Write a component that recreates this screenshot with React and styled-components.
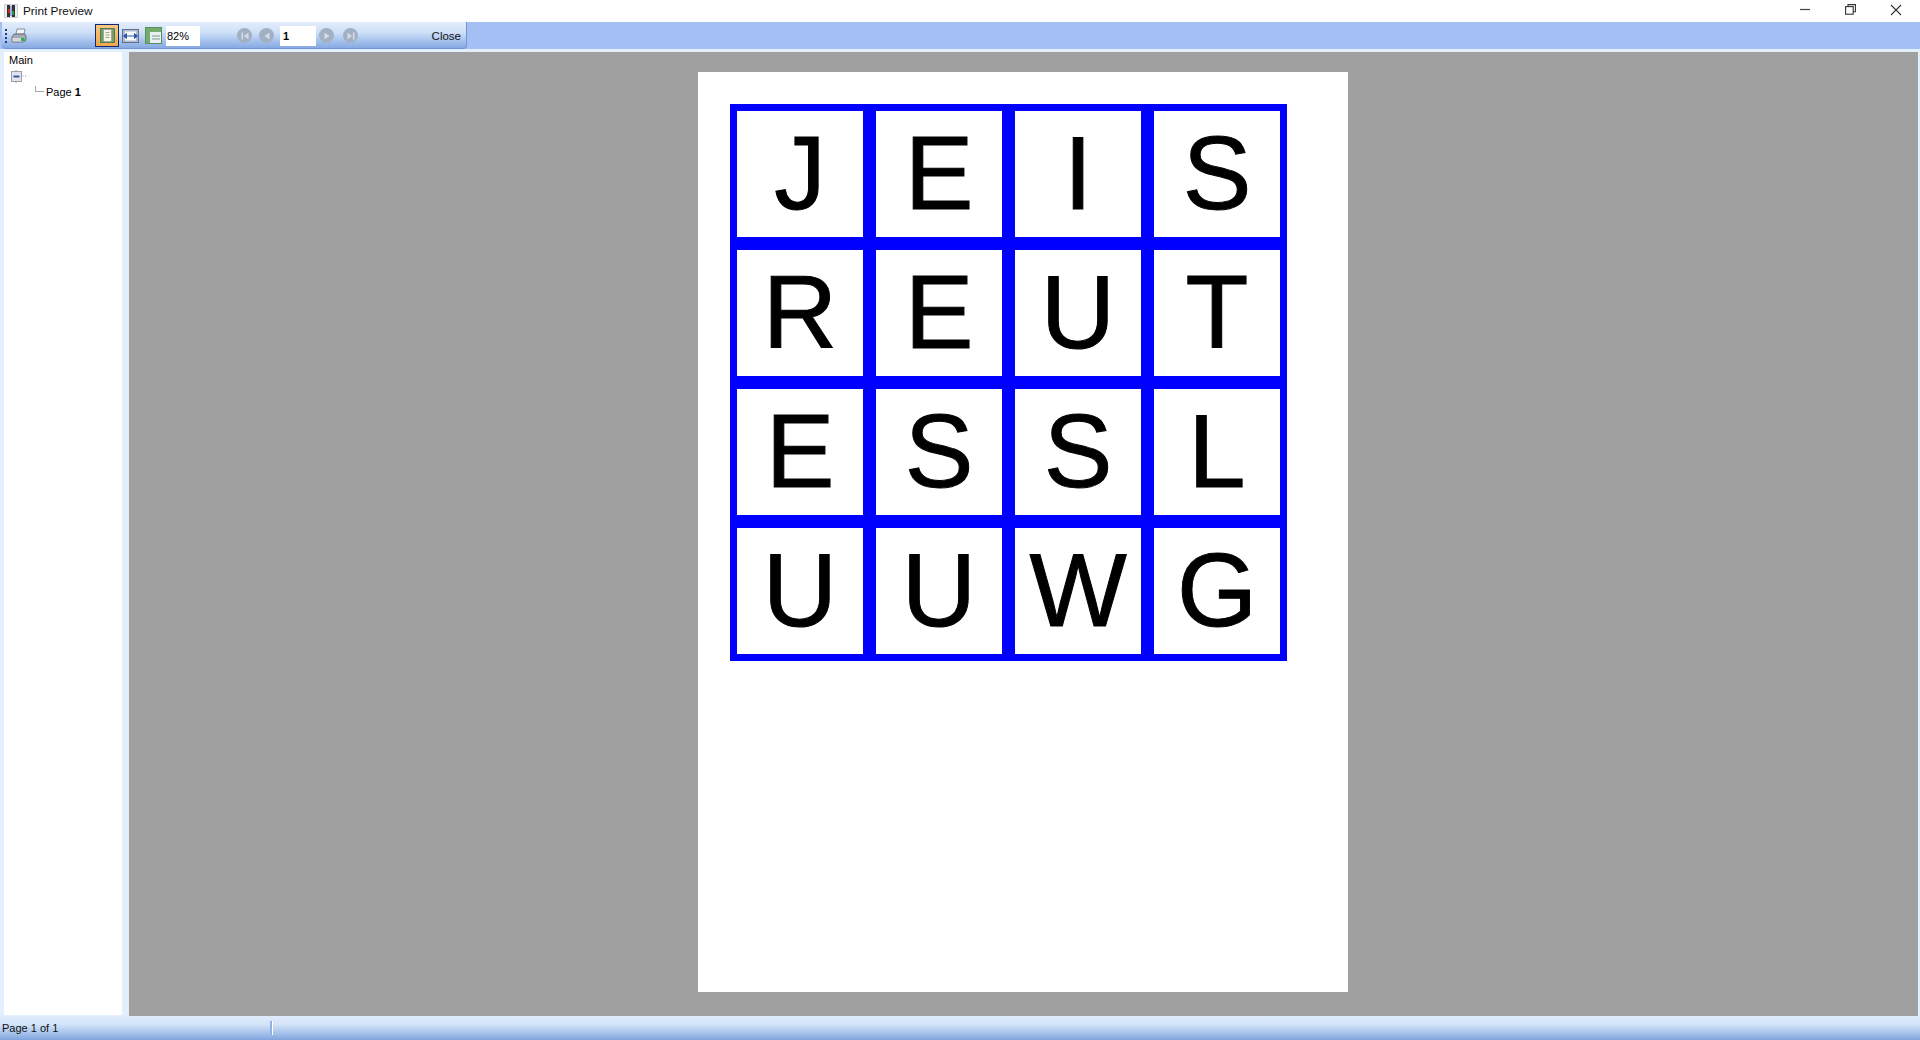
import React from 'react';
import styled, { createGlobalStyle } from 'styled-components';

const GRID = ['JEIS', 'REUT', 'ESSL', 'UUWG'];

const GlobalStyle = createGlobalStyle`
  html, body {
    margin: 0;
    height: 100%;
    overflow: hidden;
    font-family: 'Liberation Sans', Arial, sans-serif;
    font-size: 11px;
    color: #000;
  }
  #root { height: 100%; }
`;

function AppIcon() {
  return (
    <svg width="14" height="14" viewBox="0 0 14 14">
      <rect x="0.5" y="0.5" width="13" height="13" fill="#eee" stroke="#a8a8a8" strokeDasharray="1 1" />
      <rect x="3" y="1" width="3" height="12" fill="#333" />
      <rect x="4" y="5" width="2" height="4" fill="#d22" />
      <rect x="8" y="1" width="3" height="12" fill="#333" />
      <rect x="8" y="7" width="2" height="4" fill="#2a9a3a" />
      <rect x="6" y="2" width="2" height="10" fill="#8fb0e8" />
    </svg>
  );
}

function WindowControls() {
  return (
    <Controls>
      <svg width="11" height="11" viewBox="0 0 11 11">
        <path d="M0 5.5h10" stroke="#444" strokeWidth="1.2" />
      </svg>
      <svg width="11" height="11" viewBox="0 0 11 11" fill="none" stroke="#333" strokeWidth="1.1">
        <rect x="0.6" y="2.6" width="7.6" height="7.6" />
        <path d="M3 2.5V0.6h7.4V7.8H8.3" />
      </svg>
      <svg width="12" height="12" viewBox="0 0 12 12">
        <path d="M1 1l10 10M11 1L1 11" stroke="#333" strokeWidth="1.1" />
      </svg>
    </Controls>
  );
}

function PrinterIcon() {
  return (
    <svg width="16" height="16" viewBox="0 0 16 16">
      <path d="M6 1h8l-1 5H5z" fill="#f4f6f9" stroke="#6f7884" strokeWidth="0.8" />
      <path d="M3 6h11l1 2v4l-2 2H1v-5z" fill="#a3abb6" stroke="#59626e" strokeWidth="0.8" />
      <path d="M1.5 10h11v3.5h-11z" fill="#d4d8de" />
      <rect x="10" y="10" width="3.5" height="3" fill="#2fb14a" />
    </svg>
  );
}

function OnePageIcon() {
  return (
    <svg width="15" height="15" viewBox="0 0 15 15">
      <rect x="0.5" y="0.5" width="14" height="14" fill="#6f9f6c" stroke="#4e7d58" />
      <rect x="3.5" y="1.5" width="8" height="12" fill="#f4f3e4" stroke="#8f9a80" strokeWidth="0.6" />
      <path d="M5.5 4.5h4M5.5 7h4M5.5 9.5h4" stroke="#8b8f86" strokeWidth="0.8" />
    </svg>
  );
}

function PageWidthIcon() {
  return (
    <svg width="17" height="14" viewBox="0 0 17 14">
      <rect x="0.5" y="0.5" width="16" height="13" fill="#aebbd0" stroke="#5f6f86" />
      <rect x="3" y="2.5" width="11" height="9" fill="#f7f8fa" />
      <path d="M2 7h13M1.5 7l3-2.5v5zM15.5 7l-3-2.5v5z" stroke="#2d5aa8" strokeWidth="1" fill="#2d5aa8" />
    </svg>
  );
}

function TwoPageIcon() {
  return (
    <svg width="17" height="17" viewBox="0 0 17 17">
      <rect x="0.5" y="0.5" width="16" height="16" fill="#74ab6e" stroke="#5b8e5d" />
      <rect x="5" y="5" width="11" height="11" fill="#e9eff2" />
      <path d="M7 9h8M7 12h8" stroke="#7d9a8a" strokeWidth="1" />
    </svg>
  );
}

function NavGlyph({ kind }) {
  return (
    <NavCircle>
      <svg width="10" height="10" viewBox="0 0 10 10" fill="#d5dbe3">
        {kind === 'first' && <path d="M1.5 1.5h1.6v7H1.5zM8.5 1.5v7L4 5z" />}
        {kind === 'prev' && <path d="M7.5 1.5v7L2.5 5z" />}
        {kind === 'next' && <path d="M2.5 1.5v7L7.5 5z" />}
        {kind === 'last' && <path d="M6.9 1.5h1.6v7H6.9zM1.5 1.5v7L6 5z" />}
      </svg>
    </NavCircle>
  );
}

function TreeToggle() {
  return (
    <svg width="17" height="13" viewBox="0 0 17 13">
      <path d="M6 0v1.5M6 11.5V13M12.5 6h1M15 6h1" stroke="#9a9a9a" strokeWidth="1" />
      <rect x="1.5" y="1.5" width="10" height="10" fill="#e0e3ec" stroke="#9aa0ad" />
      <path d="M3.5 6.5h6" stroke="#2d4f96" strokeWidth="1.8" />
    </svg>
  );
}

export default function App() {
  return (
    <Window>
      <GlobalStyle />
      <TitleBar>
        <AppIcon />
        <TitleText>Print Preview</TitleText>
        <WindowControls />
      </TitleBar>
      <ToolStrip>
        <ToolBar>
          <Grip />
          <IconSlot $width={16} $left={4}>
            <PrinterIcon />
          </IconSlot>
          <ActiveButton>
            <OnePageIcon />
          </ActiveButton>
          <IconSlot $width={17} $left={3}>
            <PageWidthIcon />
          </IconSlot>
          <IconSlot $width={17} $left={6}>
            <TwoPageIcon />
          </IconSlot>
          <ToolInput $width={34} $left={4} $pad={1}>82%</ToolInput>
          <NavGroup $left={37} $gap={7}>
            <NavGlyph kind="first" />
            <NavGlyph kind="prev" />
          </NavGroup>
          <ToolInput $width={36} $left={6} $pad={3} $bold>1</ToolInput>
          <NavGroup $left={3} $gap={9}>
            <NavGlyph kind="next" />
            <NavGlyph kind="last" />
          </NavGroup>
          <CloseLabel>Close</CloseLabel>
        </ToolBar>
      </ToolStrip>
      <Body>
        <TreePanel>
          <TreeMain>Main</TreeMain>
          <TreeRow>
            <TreeToggle />
          </TreeRow>
          <TreeLeaf>
            <TreeBranch />
            <span>
              Page <b>1</b>
            </span>
          </TreeLeaf>
        </TreePanel>
        <Preview>
          <Sheet>
            <LetterGrid>
              {GRID.join('')
                .split('')
                .map((letter, i) => (
                  <Cell key={i}>{letter}</Cell>
                ))}
            </LetterGrid>
          </Sheet>
        </Preview>
      </Body>
      <StatusBar>
        <StatusText>Page 1 of 1</StatusText>
        <StatusDivider />
      </StatusBar>
    </Window>
  );
}

const Window = styled.div`
  display: flex;
  flex-direction: column;
  height: 100%;
  background: #fff;
`;

const TitleBar = styled.div`
  display: flex;
  align-items: center;
  flex: 0 0 22px;
  padding: 0 0 1px 4px;
  box-sizing: border-box;
  background: #fff;
`;

const TitleText = styled.span`
  margin-left: 5px;
  font-size: 11.8px;
  color: #111;
`;

const Controls = styled.div`
  display: flex;
  align-items: center;
  gap: 34px;
  margin-left: auto;
  margin-top: -2px;
  padding-right: 18px;
`;

const ToolStrip = styled.div`
  flex: 0 0 27px;
  padding-left: 2px;
  background: #a3bff4;
`;

const ToolBar = styled.div`
  display: flex;
  align-items: center;
  width: 465px;
  height: 27px;
  padding-top: 1px;
  box-sizing: border-box;
  border-radius: 0 0 4px 4px;
  border-right: 1px solid #6f95d6;
  border-bottom: 1px solid #6f95d6;
  background: linear-gradient(#e3edfc 0%, #cfe0f8 40%, #a9c5ee 70%, #86a9e2 100%);
`;

const Grip = styled.div`
  width: 2px;
  height: 14px;
  margin-left: 3px;
  background: repeating-linear-gradient(#1f3f7a 0 2px, transparent 2px 4px);
`;

const IconSlot = styled.div`
  display: flex;
  align-items: center;
  justify-content: center;
  width: ${({ $width }) => $width}px;
  margin-left: ${({ $left }) => $left}px;
`;

const ActiveButton = styled.div`
  display: flex;
  align-items: center;
  justify-content: center;
  width: 24px;
  height: 23px;
  margin-left: 68px;
  box-sizing: border-box;
  border: 1px solid #0a2a78;
  background: linear-gradient(#f8c77e, #f4a64a);
`;

const ToolInput = styled.div`
  width: ${({ $width }) => $width}px;
  height: 20px;
  margin-left: ${({ $left }) => $left}px;
  padding-left: ${({ $pad }) => $pad}px;
  box-sizing: border-box;
  background: #fff;
  line-height: 20px;
  font-weight: ${({ $bold }) => ($bold ? 700 : 400)};
`;

const NavGroup = styled.div`
  display: flex;
  gap: ${({ $gap }) => $gap}px;
  margin-left: ${({ $left }) => $left}px;
`;

const NavCircle = styled.div`
  display: flex;
  align-items: center;
  justify-content: center;
  width: 15px;
  height: 15px;
  border-radius: 50%;
  background: #a2b0c4;
`;

const CloseLabel = styled.span`
  margin-left: auto;
  padding-right: 5px;
  font-size: 11.5px;
  color: #111;
`;

const Body = styled.div`
  flex: 1;
  display: flex;
  min-height: 0;
  padding: 3px 2px 0 4px;
  background: #e4effd;
`;

const TreePanel = styled.div`
  flex: 0 0 118px;
  box-sizing: border-box;
  margin-bottom: 1px;
  padding-top: 2px;
  background: #fff;
`;

const TreeMain = styled.div`
  padding-left: 5px;
  line-height: 13px;
`;

const TreeRow = styled.div`
  display: flex;
  padding: 3px 0 0 6px;
  height: 13px;
`;

const TreeLeaf = styled.div`
  display: flex;
  align-items: center;
  margin-top: 3px;
  padding-left: 31px;
  line-height: 13px;
`;

const TreeBranch = styled.div`
  width: 9px;
  height: 6px;
  margin: -7px 2px 0 0;
  border-left: 1px solid #a8a8a8;
  border-bottom: 1px solid #a8a8a8;
  box-sizing: border-box;
`;

const Preview = styled.div`
  flex: 1;
  display: flex;
  justify-content: center;
  margin-left: 7px;
  padding: 20px 1px 0 0;
  background: #a0a0a0;
`;

const Sheet = styled.div`
  width: 650px;
  height: 920px;
  box-sizing: border-box;
  padding: 32px;
  background: #fff;
`;

const LetterGrid = styled.div`
  display: grid;
  grid-template-columns: repeat(4, 126px);
  grid-auto-rows: 126px;
  gap: 13px;
  width: max-content;
  padding: 7px;
  background: #0000ff;
`;

const Cell = styled.div`
  display: flex;
  align-items: center;
  justify-content: center;
  padding-bottom: 1px;
  background: #fff;
  font-size: 103px;
  line-height: 1;
  color: #000;
  -webkit-text-stroke: 1px #000;
`;

const StatusBar = styled.div`
  display: flex;
  align-items: center;
  flex: 0 0 24px;
  background: linear-gradient(#e0ecfc 0%, #d3e3f9 35%, #a8c4ec 70%, #7fa4dd 100%);
`;

const StatusText = styled.span`
  flex: 0 0 270px;
  padding-left: 2px;
  box-sizing: border-box;
  color: #111;
`;

const StatusDivider = styled.div`
  width: 2px;
  height: 14px;
  background: #8fb0e0;
  border-right: 1px solid #fff;
`;
